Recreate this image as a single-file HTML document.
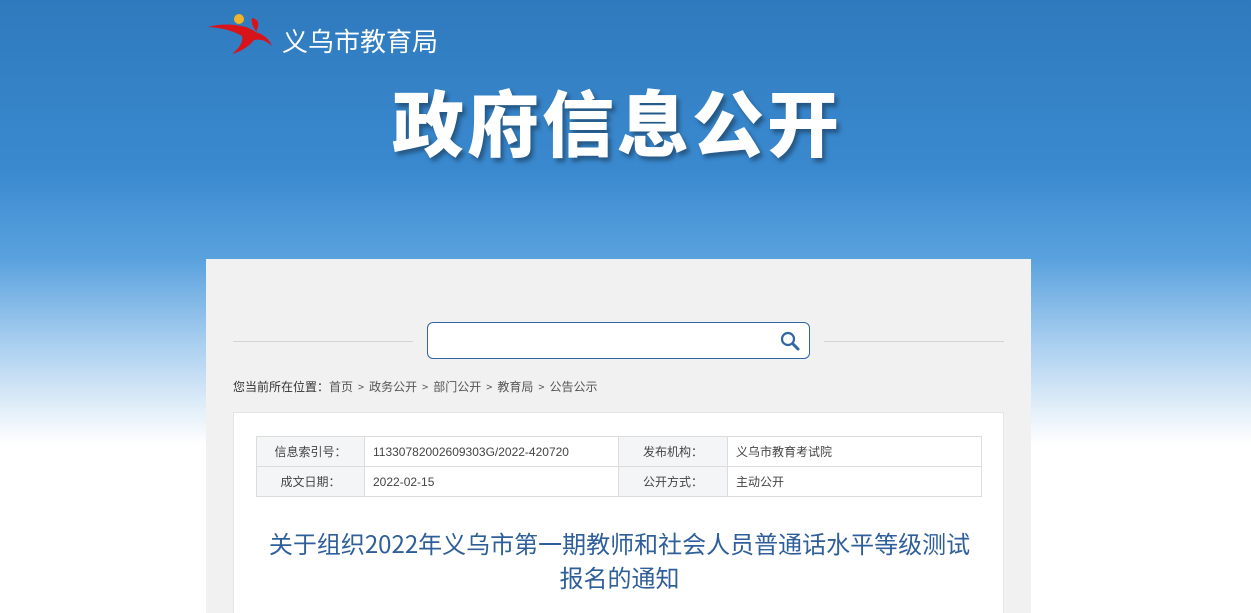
<!DOCTYPE html>
<html><head><meta charset="utf-8">
<style>
*{margin:0;padding:0;box-sizing:border-box}
html,body{width:1251px;height:613px;overflow:hidden}
body{font-family:"Liberation Sans","Noto Sans CJK SC",sans-serif;position:relative;
background:linear-gradient(180deg,#2f7abd 0px,#3a89cf 170px,#5aa2de 260px,#a6cdef 340px,#e3eff9 410px,#fff 445px,#fff 613px);}
.logo{position:absolute;left:206px;top:12px}
.lt{position:absolute;left:282px;top:22px;color:#fff;font-size:26px;font-family:"Noto Sans CJK SC",sans-serif}
.big{position:absolute;left:392px;top:74px;color:#fff;font-size:72px;font-weight:900;font-family:"Noto Sans CJK SC",sans-serif;letter-spacing:3px;text-shadow:3px 4px 4px rgba(0,0,0,.35);line-height:92px}
.main{position:absolute;left:206px;top:259px;width:825px;height:360px;background:#f1f1f1}
.ln{position:absolute;top:82px;height:1px;background:#d4d4d4}
.search{position:absolute;left:221px;top:63px;width:383px;height:37px;border:1px solid #2f66a3;border-radius:6px;background:#fff}
.crumb{position:absolute;left:27px;top:119px;font-size:12px;color:#555;font-family:"Noto Sans CJK SC",sans-serif}
.crumb b{font-weight:normal;color:#333}
.crumb i{font-style:normal;font-size:11px;margin:0 5px}
.card{position:absolute;left:27px;top:153px;width:771px;height:220px;background:#fff;border:1px solid #e4e4e4}
table{position:absolute;left:22px;top:23px;border-collapse:collapse;font-size:12px;color:#444;font-family:"Liberation Sans","Noto Sans CJK SC",sans-serif}
td{border:1px solid #dcdcdc;height:30px;padding:0 8px}
td.k{background:#f4f5f7;text-align:center}
.title{position:absolute;left:0;width:771px;top:113px;text-align:center;color:#2f5f9a;font-size:24px;line-height:34px;font-family:"Noto Sans CJK SC",sans-serif}
</style></head><body>
<svg class="logo" width="72" height="44" viewBox="0 0 72 44">
<circle cx="33" cy="7" r="5" fill="#f0b428"/>
<path d="M2 15 Q20 10 40 15 Q48 18 52 22 Q44 12 46 6 Q56 8 50 20 Q62 24 66 34 Q58 26 48 28 Q40 38 26 42 Q38 32 36 24 Q22 16 2 15Z" fill="#d8141b"/>
</svg>
<div class="lt">义乌市教育局</div>
<div class="big">政府信息公开</div>
<div class="main">
<div class="ln" style="left:27px;width:180px"></div>
<div class="ln" style="left:618px;width:180px"></div>
<div class="search"><svg style="position:absolute;right:9px;top:8px" width="20" height="20" viewBox="0 0 20 20"><circle cx="8" cy="8" r="6" fill="none" stroke="#2f66a3" stroke-width="2.2"/><path d="M12.5 12.5L18 18" stroke="#2f66a3" stroke-width="3" stroke-linecap="round"/></svg></div>
<div class="crumb"><b>您当前所在位置：</b>首页<i>&gt;</i>政务公开<i>&gt;</i>部门公开<i>&gt;</i>教育局<i>&gt;</i>公告公示</div>
<div class="card">
<table>
<tr><td class="k" style="width:108px">信息索引号：</td><td style="width:254px">11330782002609303G/2022-420720</td><td class="k" style="width:109px">发布机构：</td><td style="width:254px">义乌市教育考试院</td></tr>
<tr><td class="k">成文日期：</td><td>2022-02-15</td><td class="k">公开方式：</td><td>主动公开</td></tr>
</table>
<div class="title">关于组织2022年义乌市第一期教师和社会人员普通话水平等级测试<br>报名的通知</div>
</div>
</div>
</body></html>
